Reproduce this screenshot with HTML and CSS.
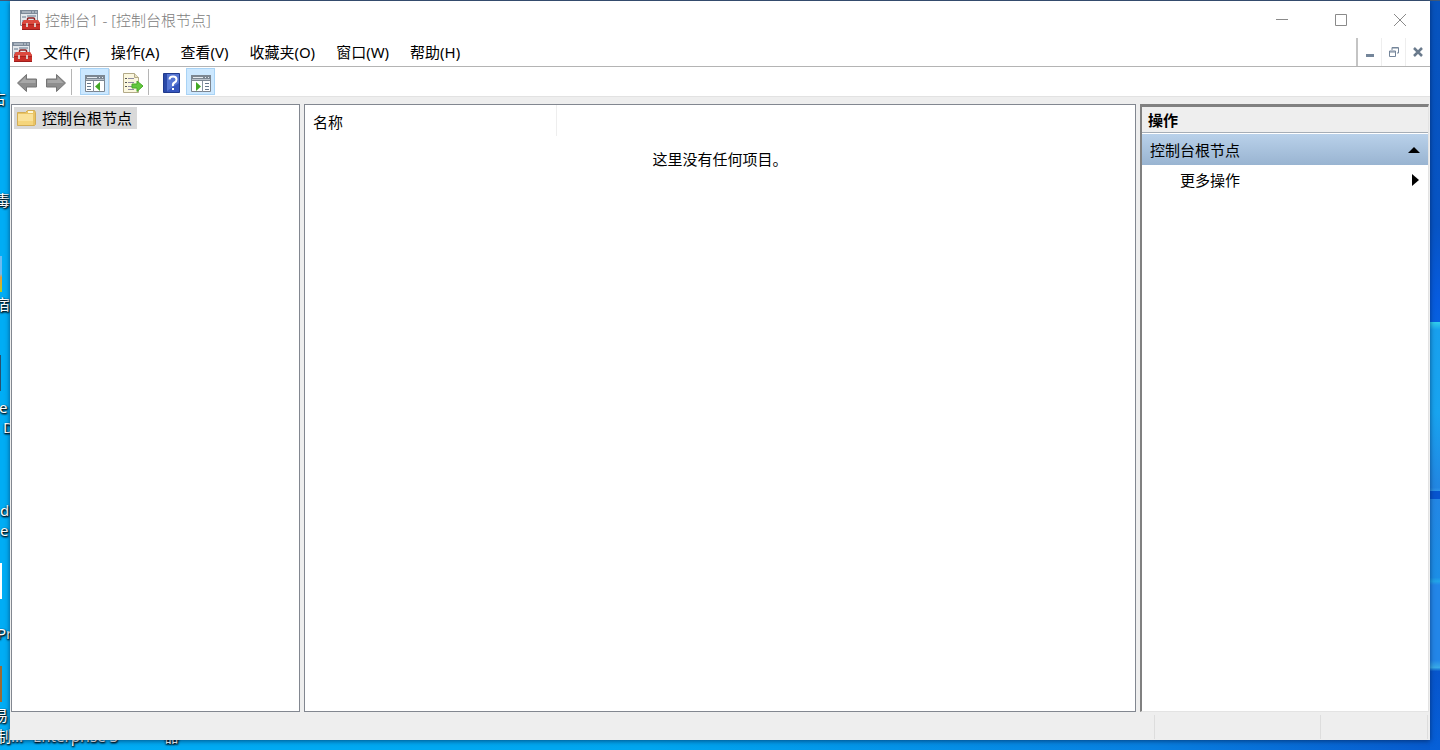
FILE: index.html
```html
<!DOCTYPE html>
<html lang="zh-CN">
<head>
  <meta charset="UTF-8" />
  <meta name="viewport" content="width=device-width, initial-scale=1.0"/>
  <title>控制台1 - [控制台根节点]</title>
  <link rel="stylesheet" href="styles.css">
</head>
<body>
  <!-- Shared icon -->
  <svg class="defs" aria-hidden="true">
    <symbol id="toolbox" viewBox="0 0 20 20">
      <path d="M.5.5h17v15H.5z" fill="#e4e8ec" stroke="#8a939e"/>
      <path d="M0 0h18v4H0z" fill="#7d8a99"/>
      <path d="M2 2h9M12 2h2M15 2h2" stroke="#d5dce4"/>
      <path d="M2 6h4v2H2zM7 5h9v2H7zM2 10h2v4H2z" fill="#a3afbc"/>
      <path d="M7.500 11V9q0-1 1-1h5q1 0 1 1v2" fill="none" stroke="#8f2020" stroke-width="1.500"/>
      <path d="M4 10h14l2 3v7H2v-7z" fill="#c92f28"/>
      <path d="M4 10h14l2 4H2z" fill="#dc4a3f"/>
      <path d="M2 14.500h18" stroke="#a82320"/>
      <path d="M6 13h2v4H6zM14 13h2v4h-2z" fill="#dcc4c0"/>
      <path d="M2 19.500h18" stroke="#9e1d1d"/>
    </symbol>
  </svg>

  <!-- Desktop behind the window -->
  <div class="desktop">
    <span class="pic pic-chart"></span>
    <span class="pic pic-dark"></span>
    <span class="pic pic-page"></span>
    <span class="pic pic-brown"></span>
    <span class="label l1">占</span>
    <span class="label l2">毒</span>
    <span class="label l3">宿</span>
    <span class="label l4">e</span>
    <span class="label l5">D</span>
    <span class="label l6">d</span>
    <span class="label l7">e</span>
    <span class="label l8">Pr</span>
    <span class="label l9">易</span>
    <span class="label l10">制...</span>
    <span class="label l11">Enterprise S</span>
    <span class="label l12">器</span>
  </div>

  <div class="window">
    <header class="titlebar">
      <svg class="app-icon"><use href="#toolbox"/></svg>
      <h1>控制台1 - [控制台根节点]</h1>
      <button class="win-btn" aria-label="最小化">
        <svg width="14" height="14"><path d="M1 6.500h12" stroke="#8a8a8a"/></svg>
      </button>
      <button class="win-btn" aria-label="最大化">
        <svg width="14" height="14"><path d="M1.500 1.500h11v11h-11z" fill="none" stroke="#8a8a8a"/></svg>
      </button>
      <button class="win-btn" aria-label="关闭">
        <svg width="14" height="14"><path d="M1 1l12 12M13 1L1 13" stroke="#8a8a8a"/></svg>
      </button>
    </header>

    <nav class="menubar">
      <svg class="app-icon"><use href="#toolbox"/></svg>
      <button class="menu">文件(F)</button>
      <button class="menu">操作(A)</button>
      <button class="menu">查看(V)</button>
      <button class="menu">收藏夹(O)</button>
      <button class="menu">窗口(W)</button>
      <button class="menu">帮助(H)</button>
      <div class="mdi">
        <button aria-label="最小化子窗口">
          <svg width="12" height="12"><path d="M2 8h8v3H2z" fill="#74859a"/></svg>
        </button>
        <button aria-label="还原子窗口">
          <svg width="12" height="12" fill="none" stroke="#74859a"><path d="M4 4V1.500h6.500V7H9M4 2h6"/><path d="M1.500 5h6v5.500h-6zM1 6h7"/></svg>
        </button>
        <button aria-label="关闭子窗口">
          <svg width="12" height="12"><path d="M2 2l8 8M10 2l-8 8" stroke="#6a7a8c" stroke-width="2.500"/></svg>
        </button>
      </div>
    </nav>

    <div class="toolbar">
      <button class="tool" aria-label="后退">
        <svg width="20" height="20"><path d="M.5 10l9-8.500V6h10v8h-10v4.500z" fill="#8e8e8e" stroke="#757575"/><path d="M2.500 10l6-6v3h10v3z" fill="#a8a8a8"/></svg>
      </button>
      <button class="tool" aria-label="前进">
        <svg width="20" height="20"><path d="M19.500 10l-9-8.500V6H.5v8h10v4.500z" fill="#8e8e8e" stroke="#757575"/><path d="M17.500 10l-6-6v3h-10v3z" fill="#a8a8a8"/></svg>
      </button>
      <span class="sep"></span>
      <button class="tool on" aria-label="显示/隐藏控制台树">
        <svg width="20" height="18">
          <path d="M.5.5h19v16H.5z" fill="#fff" stroke="#7c8590"/>
          <path d="M0 0h20v6H0z" fill="#7c8792"/><path d="M2 2.500h10M14 2.500h1M17 2.500h1" stroke="#e6ebf0"/>
          <path d="M1 4.500h18" stroke="#b9c1ca"/>
          <path d="M2 8.500h4M2 11.500h4M2 14.500h4" stroke="#66788c"/><path d="M8.500 6v11" stroke="#8793a0"/>
          <path d="M15 7v9l-5-4.500z" fill="#43a824"/>
        </svg>
      </button>
      <span class="sep faint"></span>
      <button class="tool" aria-label="导出列表">
        <svg width="20" height="20">
          <path d="M.5.5h11l4 4v15H.5z" fill="#fbf7df" stroke="#b3aa88"/>
          <path d="M11.500.5v4h4" fill="#e9e2c2" stroke="#b3aa88"/>
          <path d="M2 5.500h2M2 9.500h2M2 13.500h2" stroke="#555"/><path d="M5 5.500h6M5 9.500h6M5 13.500h5M5 16.500h6" stroke="#8d89a0"/>
          <path d="M9 11h5V8l6 5-6 5.500V15H9z" fill="#62c93e" stroke="#48a82b"/>
        </svg>
      </button>
      <span class="sep"></span>
      <button class="tool" aria-label="帮助">
        <svg width="17" height="20">
          <path d="M.5.5h16v19H.5z" fill="#3555bd" stroke="#203a8d"/>
          <path d="M1 1h3v18H1z" fill="#2b49a8"/><path d="M4 1h12v9L4 18z" fill="#5575d2"/>
          <path d="M6.500 6.500Q6.500 3.500 10 3.500T13.500 6.500Q13.500 8.500 11.500 9.500T10 13" fill="none" stroke="#fff" stroke-width="2"/>
          <path d="M9 15h2v2H9z" fill="#fff"/>
        </svg>
      </button>
      <button class="tool on" aria-label="显示/隐藏操作窗格">
        <svg width="20" height="18">
          <path d="M.5.5h19v16H.5z" fill="#fff" stroke="#7c8590"/>
          <path d="M0 0h20v6H0z" fill="#7c8792"/><path d="M2 2.500h10M14 2.500h1M17 2.500h1" stroke="#e6ebf0"/>
          <path d="M1 4.500h18" stroke="#b9c1ca"/>
          <path d="M14 8.500h4M14 11.500h4M14 14.500h4" stroke="#66788c"/><path d="M11.500 6v11" stroke="#8793a0"/>
          <path d="M5 7v9l5-4.500z" fill="#43a824"/>
        </svg>
      </button>
    </div>

    <main class="panes">
      <section class="tree">
        <a class="node" href="#">
          <svg width="20" height="18">
            <path d="M.5 3.500h8l2-2h7l1 2v12l-1 1H.5z" fill="#e9c465" stroke="#d3ad55"/>
            <path d="M11 3h5" stroke="#fff8d9" stroke-width="2"/>
            <path d="M1 5h15v11H1z" fill="#fae29a"/><path d="M1 12h15v4H1z" fill="#f5d57c"/>
          </svg>
          <span>控制台根节点</span>
        </a>
      </section>

      <section class="list">
        <table>
          <thead><tr><th class="name">名称</th><th></th></tr></thead>
          <tbody><tr><td colspan="2">这里没有任何项目。</td></tr></tbody>
        </table>
      </section>

      <aside class="actions">
        <h2>操作</h2>
        <button class="group">控制台根节点
          <svg width="12" height="6"><path d="M0 6l6-6 6 6z"/></svg>
        </button>
        <button class="more">更多操作
          <svg width="7" height="12"><path d="M0 0l7 6-7 6z"/></svg>
        </button>
      </aside>
    </main>

    <footer class="status"><span></span><span></span><span></span></footer>
  </div>
</body>
</html>
```

FILE: styles.css
```css
* {
  box-sizing: border-box;
}

body {
  margin: 0;
  height: 100vh;
  padding: 1px 10px 10px;
  overflow: hidden;
  font-family: "Noto Sans", "Noto Sans CJK SC", sans-serif;
  font-size: 15px;
  line-height: 20px;
  color: #000;
}

button {
  border: 0;
  padding: 0;
  background: none;
  font: inherit;
  color: inherit;
}

svg {
  display: block;
  flex: none;
}

.defs {
  position: absolute;
  width: 0;
  height: 0;
}

/* Desktop */
.desktop {
  position: absolute;
  inset: 0;
  overflow: hidden;
  background:
    linear-gradient(#3f5878, #3f5878) top / 100% 1px no-repeat,
    linear-gradient(#0753bd 0, #0754c4 30%, #075cdf 40%, #0760e0 43%, #30cdec 43%, #18a0ee 44%, #18a4f0 55%, #2286e2 65%, #2f96e8 65.5%, #0754cf 65.5%, #0754cf 66.5%, #2387e5 66.5%, #1c8ee6 77%, #22a5e8 77.5%, #2386e8 78%, #2386e8 88%, #38aae8 89%, #0755cc 89.5%, #0660d8 100%) right / 10px 100% no-repeat,
    linear-gradient(90deg, #00adf5, #00a6ef 45%, #087fe0 80%, #0759cd);
}

.label {
  position: absolute;
  color: #fff;
  white-space: nowrap;
  text-shadow: 1px 1px 2px #000, 0 1px 2px #000;
}

.l1 { left: -9px; top: 88px; }
.l2 { left: -5px; top: 190px; }
.l3 { left: -5px; top: 294px; }
.l4 { left: -1px; top: 397px; }
.l5 { left: 3px; top: 417px; }
.l6 { left: 0; top: 500px; }
.l7 { left: 0; top: 520px; }
.l8 { left: -3px; top: 623px; }
.l9 { left: -7px; top: 705px; }
.l10 { left: -4px; top: 726px; }
.l11 { left: 33px; top: 726px; }
.l12 { left: 164px; top: 726px; }

.pic {
  position: absolute;
  left: 0;
  width: 2px;
  height: 36px;
}

.pic-chart {
  top: 256px;
  background: linear-gradient(#6dbbf0 50%, #e89b38 60%, #b3ce25);
}

.pic-dark {
  top: 355px;
  width: 1px;
  background: #26506e;
}

.pic-page {
  top: 563px;
  background: #fff;
}

.pic-brown {
  top: 666px;
  background: #9b6a35;
}

/* Console window */
.window {
  position: relative;
  display: flex;
  flex-direction: column;
  height: 100%;
  background: #fff;
  box-shadow: 0 1px 5px rgba(0, 20, 60, 0.6);
}

.titlebar {
  display: flex;
  align-items: center;
  height: 37px;
  padding-left: 10px;
}

.app-icon {
  width: 20px;
  height: 20px;
}

.titlebar h1 {
  flex: 1;
  margin: 0 0 0 5px;
  font-size: 15px;
  font-weight: 300;
  color: #808080;
}

.win-btn {
  display: flex;
  justify-content: center;
  align-items: center;
  width: 59px;
  height: 37px;
}

.win-btn:last-child {
  width: 60px;
}

.menubar {
  display: flex;
  align-items: center;
  gap: 1px;
  height: 29px;
  padding-left: 2px;
  border-bottom: 1px solid #b4b4b4;
}

.menu {
  height: 26px;
  padding: 0 10px;
}

.mdi {
  display: flex;
  align-self: stretch;
  margin-left: auto;
  border-left: 2px solid #c4c4c4;
}

.mdi button {
  display: flex;
  justify-content: center;
  align-items: center;
  width: 24px;
  border-right: 1px solid #eee;
}

.mdi button:last-child {
  border-right: 0;
}

.toolbar {
  display: flex;
  align-items: center;
  height: 30px;
  padding-left: 2px;
  border-bottom: 1px solid #e2e2e2;
}

.tool {
  display: flex;
  justify-content: center;
  align-items: center;
  width: 29px;
  height: 27px;
  padding-top: 2px;
}

.tool.on {
  padding-top: 4px;
  background: #cce8ff;
  border: 1px solid #a9d3f5;
}

.sep {
  width: 1px;
  height: 26px;
  margin: 0 8px 0 1px;
  background: #b5b5b5;
}

.sep.faint {
  margin-left: 0;
  background: #d8d8d8;
}

.panes {
  flex: 1;
  display: grid;
  grid-template-columns: 289px 1fr 289px;
  gap: 4px;
  min-height: 0;
  padding: 7px 1px 0;
  background: #eee;
}

.tree,
.list {
  border: 1px solid #828790;
  background: #fff;
}

.node {
  display: inline-flex;
  align-items: center;
  height: 22px;
  margin: 2px 0 0 2px;
  padding: 0 5px 0 3px;
  background: #d9d9d9;
  color: #000;
  text-decoration: none;
}

.node span {
  margin-left: 5px;
}

.list table {
  width: 100%;
  border-collapse: collapse;
}

.list th {
  height: 31px;
  padding: 2px 8px 0;
  font-weight: 400;
  text-align: left;
}

.list .name {
  width: 251px;
  border-right: 1px solid #eee;
}

.list td {
  height: 46px;
  padding: 0;
  text-align: center;
}

.actions {
  border: 1px solid #e3e3e3;
  border-top: 3px solid #808080;
  border-left: 2px solid #808080;
  background: #fff;
}

.actions h2 {
  height: 26px;
  margin: 0 0 1px;
  padding: 3px 6px;
  border-bottom: 1px solid #a5adb6;
  background: #eee;
  font-size: 15px;
  font-weight: 700;
}

.group,
.more {
  display: flex;
  justify-content: space-between;
  align-items: center;
  width: 100%;
  height: 31px;
  padding: 0 8px;
}

.group {
  background: linear-gradient(#b9d1ea, #99b4d1);
}

.more {
  height: 29px;
  padding: 0 9px 0 38px;
}

.status {
  display: flex;
  height: 28px;
  padding: 3px 2px 1px;
  background: #eee;
}

.status span {
  width: 166px;
  border-right: 1px solid #ddd;
}

.status span:first-child {
  flex: 1;
}

.status span:last-child {
  width: 107px;
}
```
